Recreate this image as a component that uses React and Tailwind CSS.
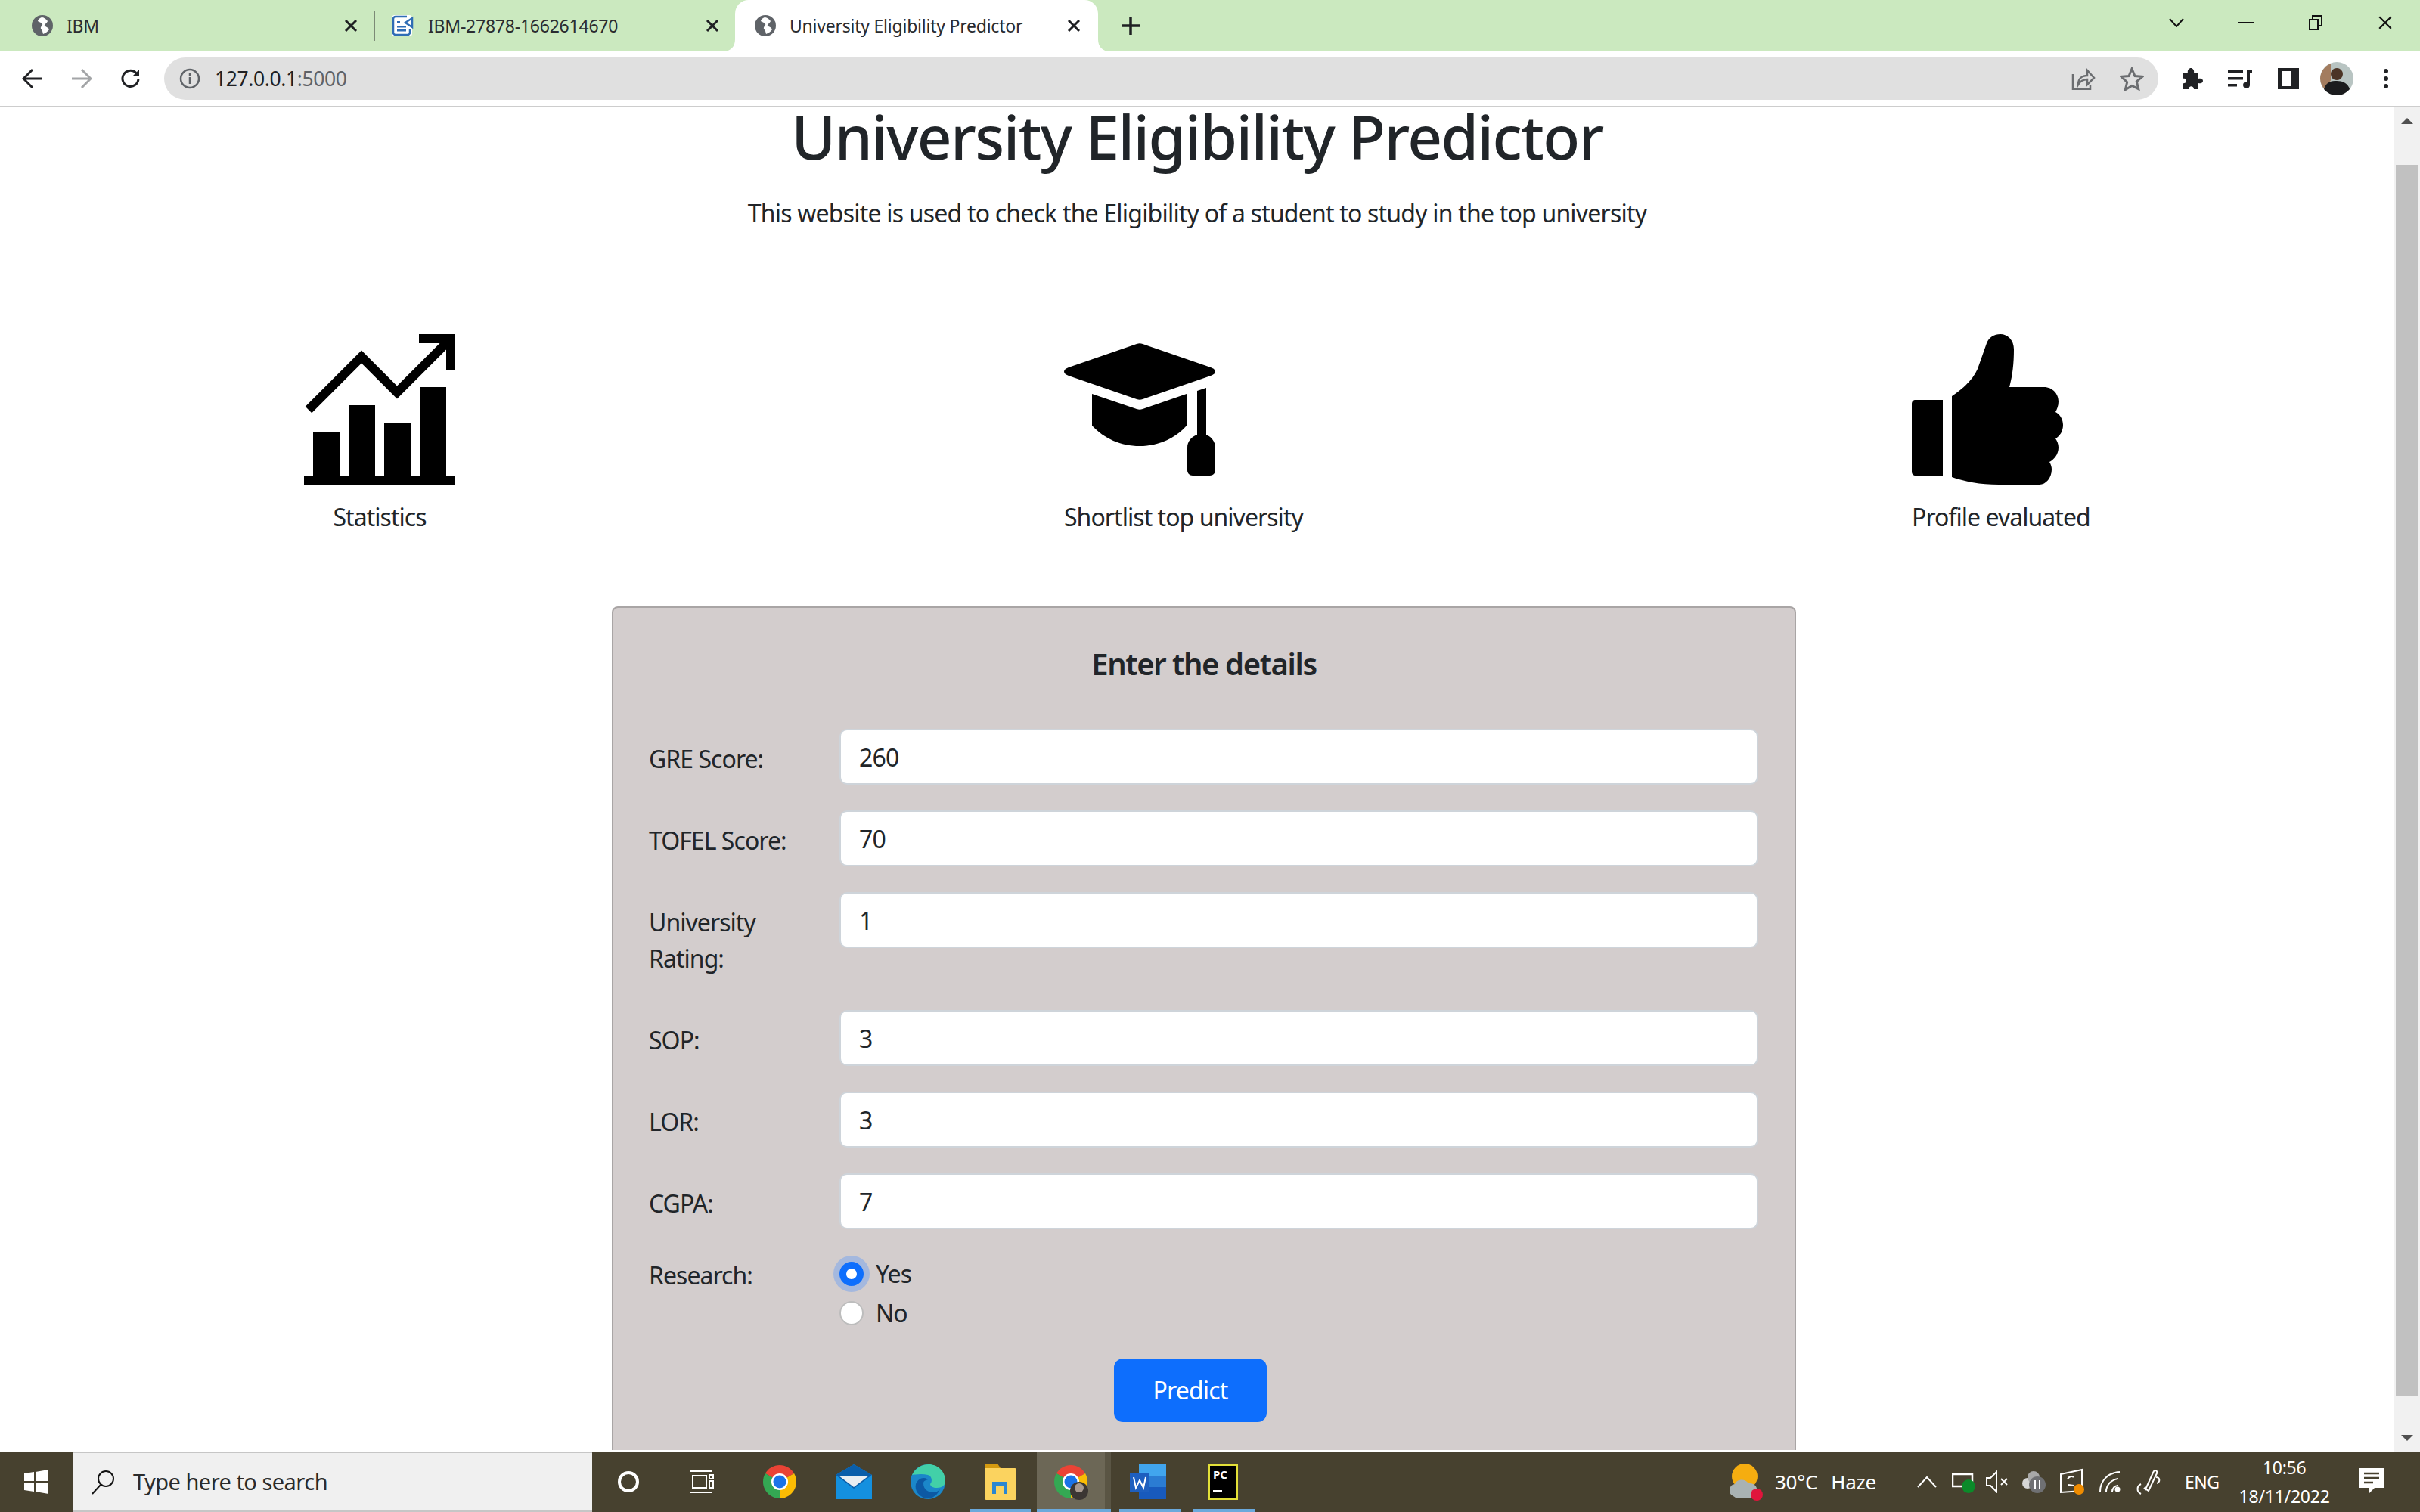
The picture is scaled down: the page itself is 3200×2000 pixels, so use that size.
import React from "react";

const font = { fontFamily: '"Noto Sans", "Open Sans", sans-serif' };

function Globe() {
  return (
    <svg width="28" height="28" viewBox="0 0 28 28" className="shrink-0">
      <circle cx="14" cy="14" r="14" fill="#5f6368" />
      <path d="M13 3c-3 1-5 3-5 5 2 2 5 1 6 4 1 2-3 3-2 6l2 3 1 4c3-1 6-3 8-6-1-3-4-3-6-5-1-2 3-3 4-6-2-3-5-5-8-5z" fill="#fff" />
    </svg>
  );
}

function DocIcon() {
  return (
    <svg width="30" height="28" viewBox="0 0 30 28" className="shrink-0">
      <rect x="0" y="0" width="27" height="28" rx="4" fill="#fff" />
      <path d="M20 2H5a3 3 0 0 0-3 3v18a3 3 0 0 0 3 3h16a3 3 0 0 0 3-3v-5" stroke="#2f6db5" strokeWidth="2.500" fill="none" />
      <path d="M7 8h4v3H7zM7 14h12v2.500H7zM7 19h12v2.500H7z" fill="#2f6db5" />
      <path d="M27 4v12l-9-6z" fill="#fff" stroke="#2f6db5" strokeWidth="2.500" />
    </svg>
  );
}

function X({ size = 18, w = 3, color = "#1f2023" }) {
  return (
    <svg width={size} height={size} viewBox="0 0 18 18" className="shrink-0">
      <path d="M2 2l14 14M16 2L2 16" stroke={color} strokeWidth={w} fill="none" />
    </svg>
  );
}

function Tab({ icon, title, className }) {
  return (
    <div className={"flex h-full shrink-0 items-center " + className}>
      {icon}
      <span className="ml-[18px] whitespace-nowrap text-[23px] leading-[30px] tracking-[-0.01em] text-[#2a2c30]">{title}</span>
      <div className="ml-auto">
        <X />
      </div>
    </div>
  );
}

function TopBars() {
  return (
    <div className="shrink-0">
      <div className="flex h-[68px] items-center bg-[#cbe9bf]">
        <div className="flex h-full items-center">
          <Tab icon={<Globe />} title="IBM" className="w-[494px] pl-[42px] pr-[21px]" />
          <div className="h-[40px] w-[2px] bg-[#7c8a76]" />
          <Tab icon={<DocIcon />} title="IBM-27878-1662614670" className="w-[476px] pl-[22px] pr-[21px]" />
          <div className="relative h-full">
            <Tab icon={<Globe />} title="University Eligibility Predictor" className="w-[480px] rounded-t-[18px] bg-white pl-[26px] pr-[23px]" />
            <svg width="16" height="16" viewBox="0 0 16 16" className="absolute bottom-0 left-[-16px]">
              <path d="M16 0v16H0c10 0 16-6 16-16z" fill="#fff" />
            </svg>
            <svg width="16" height="16" viewBox="0 0 16 16" className="absolute bottom-0 right-[-16px]">
              <path d="M0 0v16h16C6 16 0 10 0 0z" fill="#fff" />
            </svg>
          </div>
          <svg width="26" height="26" viewBox="0 0 26 26" className="ml-[30px]">
            <path d="M13 1v24M1 13h24" stroke="#1f2023" strokeWidth="3.500" />
          </svg>
        </div>
        <div className="ml-auto flex items-center pb-[8px]">
          <svg width="20" height="12" viewBox="0 0 20 12">
            <path d="M1 1l9 10 9-10" stroke="#111" strokeWidth="2" fill="none" />
          </svg>
          <div className="ml-[72px] h-[2px] w-[20px] bg-[#111]" />
          <svg width="18" height="20" viewBox="0 0 18 20" className="ml-[73px]">
            <path d="M1 6h11v13H1zM5 6V1h12v13h-5" stroke="#111" strokeWidth="2" fill="none" />
          </svg>
          <div className="ml-[73px] mr-[36px]">
            <X size={20} w={2} color="#111" />
          </div>
        </div>
      </div>
      <div className="flex h-[74px] items-center border-b-2 border-[#cdcdcd] bg-white">
        <svg width="28" height="28" viewBox="0 0 28 28" className="ml-[29px]">
          <path d="M27 14H3M14 2L2 14l12 12" stroke="#202124" strokeWidth="3" fill="none" />
        </svg>
        <svg width="28" height="28" viewBox="0 0 28 28" className="ml-[37px]">
          <path d="M1 14h24M14 2l12 12-12 12" stroke="#a3a5a7" strokeWidth="3" fill="none" />
        </svg>
        <svg width="28" height="28" viewBox="0 0 28 28" className="ml-[37px]">
          <path d="M24 14a10.500 10.500 0 1 1-3-7.500" stroke="#202124" strokeWidth="3" fill="none" />
          <path d="M25 2v9h-9z" fill="#202124" />
        </svg>
        <div className="ml-[30px] flex h-[56px] w-[2637px] items-center rounded-full bg-[#e0e0e0] pl-[20px]">
          <svg width="28" height="28" viewBox="0 0 28 28">
            <circle cx="14" cy="14" r="12" stroke="#5f6368" strokeWidth="2.500" fill="none" />
            <path d="M14 12v9M14 7v3" stroke="#5f6368" strokeWidth="2.500" />
          </svg>
          <span className="ml-[19px] text-[26.500px] leading-[36px] tracking-[-0.015em] text-[#202124]">
            127.0.0.1<span className="text-[#5f6368]">:5000</span>
          </span>
          <svg width="32" height="30" viewBox="0 0 32 30" className="ml-auto">
            <path d="M2 9v20h23v-6" stroke="#6b6d70" strokeWidth="2.500" fill="none" />
            <path d="M9 23c0-8 5-12 12-12V4l9 10-9 9v-7c-5 0-9 2-12 7z" stroke="#6b6d70" strokeWidth="2.500" fill="none" />
          </svg>
          <svg width="32" height="32" viewBox="0 0 32 32" className="ml-[32px] mr-[19px]">
            <path d="M16 3l4 9.500 10 .8-7.700 6.500 2.400 9.900L16 25.400l-8.700 5.300 2.400-9.900L2 13.300l10-.8z" stroke="#6b6d70" strokeWidth="3" fill="none" />
          </svg>
        </div>
        <svg width="28" height="30" viewBox="0 0 28 30" className="ml-[31px]">
          <path d="M1 8h7c-1-5 2-7 4-7s5 2 4 7h6v7c4-1 6 1 6 3s-2 4-6 3v8h-6c0-5-7-5-7 0H1v-8c4 1 5-2 5-3s-1-4-5-3z" fill="#202124" />
        </svg>
        <svg width="32" height="24" viewBox="0 0 32 24" className="ml-[33px]">
          <path d="M0 1h20v3.500H0zM0 10h20v3.500H0zM0 19h12v3.500H0z" fill="#202124" />
          <path d="M25 1h7v4h-3v15a4.500 4.500 0 1 1-4-4z" fill="#202124" />
        </svg>
        <div className="ml-[34px] h-[28px] w-[28px] border-y-[4px] border-l-[5px] border-r-[10px] border-[#202124]" />
        <svg width="44" height="44" viewBox="0 0 44 44" className="ml-[28px]">
          <circle cx="22" cy="22" r="22" fill="#b8c4c2" />
          <path d="M0 22a22 22 0 0 1 14-20v22L8 38A22 22 0 0 1 0 22z" fill="#a37c5f" />
          <circle cx="22" cy="16" r="8" fill="#4c3426" />
          <path d="M5 36c3-10 10-11 17-11s15 3 17 11a22 22 0 0 1-34 0z" fill="#1b1c1e" />
        </svg>
        <div className="ml-[40px] flex flex-col gap-[4px]">
          <div className="h-[6px] w-[6px] rounded-full bg-[#202124]" />
          <div className="h-[6px] w-[6px] rounded-full bg-[#202124]" />
          <div className="h-[6px] w-[6px] rounded-full bg-[#202124]" />
        </div>
      </div>
    </div>
  );
}

function StatsIcon() {
  return (
    <svg width="200" height="200" viewBox="0 0 200 200">
      <path d="M0 188h200v12H0zM12 129h35v60H12zM59 94h35v95H59zM106 117h35v72h-35zM153 70h35v119h-35z" />
      <path d="M6 100l70-70 47 47 69-69" stroke="#000" strokeWidth="12" fill="none" />
      <path d="M152 0h48v47h-12V12h-36z" />
    </svg>
  );
}

function CapIcon() {
  return (
    <svg width="200" height="200" viewBox="0 0 200 200">
      <path d="M96 13c3-1 5-1 8 0l90 31c8 3 8 8 0 11l-90 31c-3 1-5 1-8 0L6 55c-8-3-8-8 0-11z" />
      <path d="M37 79l59 20c3 1 5 1 8 0l58-20v42c-15 17-37 27-62 27s-47-10-63-27z" />
      <path d="M176 75l12-4v62c7 3 12 9 12 17v30c0 4-3 7-7 7h-23c-4 0-7-3-7-7v-30c0-8 5-14 13-17z" />
    </svg>
  );
}

function ThumbIcon() {
  return (
    <svg width="200" height="200" viewBox="0 0 200 200">
      <path d="M5 87h36v100H5c-3 0-5-2-5-5V92c0-3 2-5 5-5z" />
      <path d="M53 82c15-10 28-22 34-36l12-34c3-8 10-12 18-12 10 0 18 8 18 20 0 20-2 36-6 50h46c11 0 19 9 19 19 0 6-2 10-4 14 6 3 10 10 10 17 0 8-4 15-10 18 2 3 4 7 4 12 0 9-6 16-12 19 2 3 3 7 3 10 0 11-8 20-16 20h-54c-25 0-45-4-62-10z" />
    </svg>
  );
}

function Feature({ icon, label, className }) {
  return (
    <div className={"flex flex-col " + className}>
      {icon}
      <p className="mt-[18px] whitespace-nowrap text-[32px] leading-[48px] tracking-[-0.03em]">{label}</p>
    </div>
  );
}

function Row({ label, value }) {
  return (
    <div className="mb-[30px] flex items-start">
      <label className="w-[252px] shrink-0 pb-[14px] pr-[24px] pt-[16px] text-[32px] leading-[48px] tracking-[-0.03em]">
        {label}
      </label>
      <input
        readOnly
        defaultValue={value}
        className="h-[74px] w-[1215px] rounded-[10px] border-2 border-[#ced4da] bg-white px-[24px] text-[32px] tracking-[-0.025em] text-[#212529] outline-none"
      />
    </div>
  );
}

function Radio({ label, checked }) {
  return (
    <div className="flex h-[52px] items-center">
      <input
        type="radio"
        name="research"
        readOnly
        defaultChecked={checked}
        className="h-[32px] w-[32px] appearance-none rounded-full border-2 border-[#bdbdbd] bg-white checked:border-[9px] checked:border-[#0d6efd] checked:shadow-[0_0_0_8px_#a4b8de]"
      />
      <span className="ml-[16px] text-[32px] tracking-[-0.03em]">{label}</span>
    </div>
  );
}

function Form() {
  return (
    <div className="ml-[809px] w-[1566px] shrink-0 rounded-t-[8px] border-2 border-b-0 border-[#a9a5a5] bg-[#d3cdcd] pb-[100px] pl-[47px] pt-[44px]">
      <h5 className="ml-[-47px] text-center text-[40px] font-semibold leading-[60px] tracking-[-0.035em]">Enter the details</h5>
      <div className="mt-[56px]">
        <Row label="GRE Score:" value="260" />
        <Row label="TOFEL Score:" value="70" />
        <Row label="University Rating:" value="1" />
        <Row label="SOP:" value="3" />
        <Row label="LOR:" value="3" />
        <Row label="CGPA:" value="7" />
      </div>
      <div className="mt-[-1px] flex">
        <span className="w-[252px] pt-[4px] text-[32px] leading-[48px] tracking-[-0.03em]">Research:</span>
        <div>
          <Radio label="Yes" checked />
          <Radio label="No" />
        </div>
      </div>
      <button className="ml-[615px] mt-[34px] h-[84px] w-[202px] rounded-[12px] bg-[#0d6efd] text-[32px] tracking-[-0.025em] text-white">
        Predict
      </button>
    </div>
  );
}

function Scrollbar() {
  return (
    <div className="flex w-[34px] shrink-0 flex-col items-center bg-[#f1f1f1]">
      <svg width="16" height="8" viewBox="0 0 16 8" className="mb-[54px] mt-[14px]">
        <path d="M8 0l8 8H0z" fill="#505050" />
      </svg>
      <div className="h-[1629px] w-[30px] bg-[#c1c1c1]" />
      <svg width="16" height="8" viewBox="0 0 16 8" className="mt-[51px]">
        <path d="M0 0h16L8 8z" fill="#505050" />
      </svg>
    </div>
  );
}

function Chrome({ badge }) {
  return (
    <svg width="48" height="48" viewBox="0 0 48 48">
      <path d="M24 24L4.950 13A22 22 0 0 1 43.050 13Z" fill="#ea4335" />
      <path d="M24 24L43.050 13A22 22 0 0 1 24 46Z" fill="#fbbc04" />
      <path d="M24 24L24 46A22 22 0 0 1 4.950 13Z" fill="#34a853" />
      <circle cx="24" cy="24" r="11" fill="#fff" />
      <circle cx="24" cy="24" r="8.500" fill="#1a73e8" />
      {badge && <circle cx="35" cy="36" r="12" fill="#3b3633" />}
      {badge && <circle cx="35" cy="32" r="6" fill="#a89a90" />}
    </svg>
  );
}

function Taskbar() {
  const white = "#ffffff";
  return (
    <div className="flex h-[80px] shrink-0 items-center bg-[#47412f] text-white">
      <svg width="32" height="32" viewBox="0 0 32 32" className="ml-[32px]">
        <path d="M0 5l13-2v12H0zM15 3l17-3v15H15zM0 17h13v12L0 27zM15 17h17v15l-17-3z" fill={white} />
      </svg>
      <div className="ml-[33px] flex h-full w-[686px] items-center border-y-2 border-[#c6c6c6] bg-[#f0f0f0] pl-[22px]">
        <svg width="34" height="34" viewBox="0 0 34 34">
          <circle cx="21" cy="13" r="10" stroke="#111" strokeWidth="2" fill="none" />
          <path d="M14 21L3 33" stroke="#111" strokeWidth="2" />
        </svg>
        <span className="ml-[23px] text-[29px] tracking-[-0.018em] text-[#2b2b2b]">Type here to search</span>
      </div>
      <svg width="30" height="30" viewBox="0 0 30 30" className="ml-[33px]">
        <circle cx="15" cy="15" r="12" stroke={white} strokeWidth="4" fill="none" />
      </svg>
      <svg width="32" height="30" viewBox="0 0 32 30" className="ml-[66px]">
        <path d="M1 1h28M1 29h28M4 7h18v16H4zM26 6h5v5h-5zM26 14h5v9h-5z" stroke={white} strokeWidth="2" fill="none" />
      </svg>
      <div className="ml-[63px]">
        <Chrome />
      </div>
      <svg width="48" height="46" viewBox="0 0 48 46" className="ml-[50px]">
        <path d="M0 14L24 0l24 14v32H0z" fill="#1490df" />
        <path d="M0 14l24 18 24-18L24 0z" fill="#0a5eaa" />
        <path d="M4 15h40L24 30z" fill="#e9eef2" />
      </svg>
      <svg width="48" height="48" viewBox="0 0 48 48" className="ml-[50px]">
        <circle cx="24" cy="24" r="23" fill="#1b87c9" />
        <path d="M3 15C8 5 17 1 25 1c12 0 22 9 22 22 0 6-5 9-11 9-5 0-9-2-9-5 3-3 3-10-3-12C15 13 6 15 3 15z" fill="#42d0a8" />
        <path d="M18 26c0 8 6 12 13 12 4 0 7-2 9-4-4 9-12 13-19 12C12 43 6 36 8 27c2-5 6-8 10-8 4 0 6 2 6 2-3 1-6 2-6 5z" fill="#0c59a4" />
      </svg>
      <div className="relative ml-[49px] flex h-full items-center">
        <svg width="44" height="48" viewBox="0 0 44 48">
          <path d="M2 0h17l4 6h-21z" fill="#d49a10" />
          <path d="M2 6h40a2 2 0 0 1 2 2v38a2 2 0 0 1-2 2H4a2 2 0 0 1-2-2z" fill="#fbd35f" />
          <path d="M12 40V24h20v16h-5V29H17v11z" fill="#2a86d1" />
        </svg>
        <span className="absolute bottom-0 left-[-17px] h-[4px] w-[80px] bg-[#6aa9dc]" />
      </div>
      <div className="relative ml-[27px] flex h-full w-[98px] items-center justify-center border-r-[8px] border-[#5a5544] bg-[#6c6756]">
        <Chrome badge />
        <span className="absolute bottom-0 left-0 h-[4px] w-[98px] bg-[#6aa9dc]" />
      </div>
      <div className="relative ml-[25px] flex h-full items-center">
        <svg width="48" height="46" viewBox="0 0 48 46">
          <path d="M12 0h36v15H12z" fill="#41a5ee" />
          <path d="M12 15h36v15H12z" fill="#2b7cd3" />
          <path d="M12 30h36v16H12z" fill="#185abd" />
          <path d="M0 11h26v26H0z" fill="#1e5fbf" />
          <path d="M5 17l3 14 5-10 5 10 3-14" stroke="#fff" strokeWidth="2" fill="none" />
        </svg>
        <span className="absolute bottom-0 left-[-14px] h-[4px] w-[82px] bg-[#6aa9dc]" />
      </div>
      <div className="relative ml-[55px] flex h-full items-center">
        <div className="flex h-[48px] w-[40px] flex-col border-[3px] border-[#e3e038] bg-black pl-[4px] pt-[4px]">
          <span className="text-[15px] font-bold leading-[15px] text-white">PC</span>
          <div className="mt-[13px] h-[3px] w-[12px] bg-white" />
        </div>
        <span className="absolute bottom-0 left-[-19px] h-[4px] w-[82px] bg-[#6aa9dc]" />
      </div>

      <svg width="46" height="50" viewBox="0 0 46 50" className="ml-[648px]">
        <circle cx="22" cy="18" r="17" fill="#f5ad10" />
        <path d="M4 42c-4-5-2-13 5-14 2-6 13-8 18-1 8-1 13 5 11 13l-6 6H10z" fill="#a9b2b3" />
        <circle cx="38" cy="42" r="8" fill="#e0143c" />
      </svg>
      <span className="ml-[16px] whitespace-nowrap text-[26px] tracking-[-0.01em]">30°C</span>
      <span className="ml-[18px] whitespace-nowrap text-[26px] tracking-[-0.01em]">Haze</span>
      <svg width="26" height="16" viewBox="0 0 26 16" className="ml-[54px]">
        <path d="M1 15L13 2l12 13" stroke={white} strokeWidth="2" fill="none" />
      </svg>
      <svg width="32" height="32" viewBox="0 0 32 32" className="ml-[20px]">
        <path d="M1 6h26v16H1z" stroke={white} strokeWidth="2.500" fill="none" />
        <circle cx="22" cy="22" r="9" fill="#0b8a2a" />
      </svg>
      <svg width="34" height="30" viewBox="0 0 34 30" className="ml-[12px]">
        <path d="M2 10h5l8-8v26l-8-8H2z" stroke={white} strokeWidth="2" fill="none" />
        <path d="M21 11l8 8M29 11l-8 8" stroke={white} strokeWidth="2" />
      </svg>
      <svg width="34" height="32" viewBox="0 0 34 32" className="ml-[14px]">
        <circle cx="8" cy="18" r="7" fill="#d6d6d6" />
        <circle cx="16" cy="10" r="8" fill="#a9a9a9" />
        <circle cx="21" cy="20" r="11" fill="#6f7073" />
        <path d="M18 14v12M24 14v12" stroke={white} strokeWidth="2" />
      </svg>
      <svg width="36" height="36" viewBox="0 0 36 36" className="ml-[16px]">
        <path d="M2 8l28-6v28l-28 2z" stroke={white} strokeWidth="2" fill="none" />
        <path d="M11 15c1-4 6-5 8-3M19 23l-7-1" stroke={white} strokeWidth="2" fill="none" />
        <circle cx="26" cy="28" r="7" fill="#f08c00" />
      </svg>
      <svg width="30" height="30" viewBox="0 0 30 30" className="ml-[16px]">
        <path d="M2 28C2 14 12 3 28 2M10 28c0-9 7-16 16-17M18 28c0-4 3-8 8-8" stroke={white} strokeWidth="2" fill="none" />
        <circle cx="25" cy="25" r="3.500" fill={white} />
      </svg>
      <svg width="32" height="36" viewBox="0 0 32 36" className="ml-[20px]">
        <path d="M6 34c-6-3-6-10 0-13M10 26l2 2 10-22c2-5 6-3 5 1L16 30zM26 12c5 0 6 6 1 8" stroke={white} strokeWidth="2" fill="none" />
      </svg>
      <span className="ml-[32px] whitespace-nowrap text-[23px] tracking-[-0.02em]">ENG</span>
      <div className="ml-[24px] flex w-[124px] flex-col items-center text-[23px] leading-[38px] tracking-[-0.01em]">
        <span>10:56</span>
        <span>18/11/2022</span>
      </div>
      <svg width="32" height="36" viewBox="0 0 32 36" className="ml-[37px]">
        <path d="M0 0h32v26H20l-8 8v-8H0z" fill={white} />
        <path d="M6 7h20M6 13h20M6 19h12" stroke="#47412f" strokeWidth="2.500" />
      </svg>
    </div>
  );
}

export default function App() {
  return (
    <div className="flex h-[2000px] w-[3200px] flex-col overflow-hidden bg-white text-[#212529]" style={font}>
      <TopBars />
      <div className="flex min-h-0 flex-1">
        <div className="min-w-0 flex-1">
          <h1 className="text-center text-[80px] font-medium leading-[76px] tracking-[-0.02em]">University Eligibility Predictor</h1>
          <p className="mt-[40px] text-center text-[32px] leading-[48px] tracking-[-0.025em]">
            This website is used to check the Eligibility of a student to study in the top university
          </p>
          <div className="mt-[136px] flex">
            <Feature icon={<StatsIcon />} label="Statistics" className="ml-[402px] w-[200px] items-center" />
            <Feature icon={<CapIcon />} label="Shortlist top university" className="ml-[805px] w-[317px] items-start" />
            <Feature icon={<ThumbIcon />} label="Profile evaluated" className="ml-[804px] w-[237px] items-start" />
          </div>
          <div className="mt-[94px] flex h-[1116px] overflow-hidden">
            <Form />
          </div>
        </div>
        <Scrollbar />
      </div>
      <Taskbar />
    </div>
  );
}
